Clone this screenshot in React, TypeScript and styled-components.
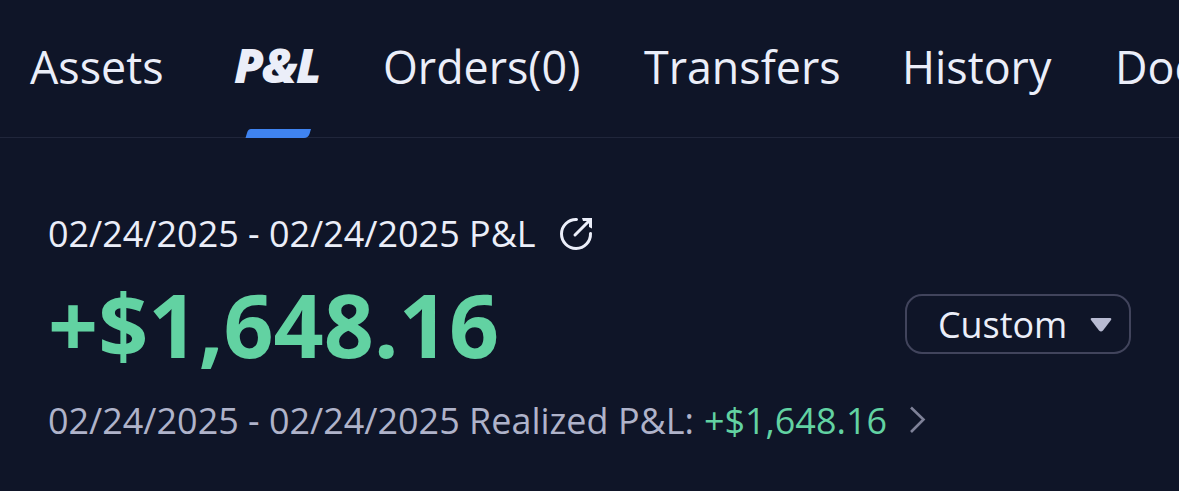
import styled, { createGlobalStyle } from 'styled-components';

const GlobalStyle = createGlobalStyle`
  * {
    box-sizing: border-box;
  }
  body {
    margin: 0;
    background: #0f1528;
    font-family: 'Open Sans', 'Noto Sans', sans-serif;
  }
`;

const Screen = styled.div`
  width: 1179px;
  height: 491px;
  overflow: hidden;
  background: #0f1528;
`;

const TabBar = styled.nav`
  display: flex;
  height: 138px;
  padding-left: 30px;
  box-shadow: inset 0 -1px #20263b;
  overflow: hidden;
`;

const Tab = styled.div<{ $width: number; $active?: boolean }>`
  display: flex;
  flex-direction: column;
  justify-content: space-between;
  flex: none;
  width: ${(props) => props.$width}px;
  padding-top: ${(props) => (props.$active ? 35 : 37)}px;
  color: #ebeef9;
  font-size: ${(props) => (props.$active ? 48 : 44.8)}px;
  font-weight: ${(props) => (props.$active ? 800 : 400)};
  font-style: ${(props) => (props.$active ? 'italic' : 'normal')};
  letter-spacing: ${(props) => (props.$active ? '-1.5px' : 'normal')};
  line-height: 60px;
  white-space: nowrap;
`;

const Label = styled.span`
  white-space: nowrap;
`;

const Indicator = styled.svg`
  display: block;
  margin-left: 10px;
`;

const Summary = styled.main`
  display: flex;
  flex-direction: column;
  padding: 70px 48px 0;
`;

const PeriodRow = styled.div`
  display: flex;
  align-items: center;
  height: 50px;
  color: #ebeef9;
  font-size: 35.95px;
  white-space: nowrap;
`;

const TotalRow = styled.div`
  display: flex;
  align-items: center;
  justify-content: space-between;
  height: 132px;
`;

const Total = styled.div`
  color: #62d2a2;
  font-size: 87.7px;
  font-weight: 700;
  line-height: 128px;
`;

const RangeSelect = styled.button`
  display: flex;
  align-items: center;
  justify-content: space-between;
  width: 226px;
  height: 60px;
  padding: 0 17px 0 31px;
  border: 2px solid #41445c;
  border-radius: 17px;
  background: transparent;
  color: #ebeef9;
  font: inherit;
  font-size: 35.9px;
`;

const RealizedRow = styled.div`
  display: flex;
  align-items: center;
  height: 60px;
  color: #afb3ca;
  font-size: 35.95px;
`;

const Gain = styled.span`
  margin-left: 10px;
  color: #62d2a2;
`;

const Icon = styled.svg<{ $gap?: number }>`
  flex: none;
  margin-left: ${(props) => props.$gap ?? 0}px;
`;

const tabs = [
  { label: 'Assets', width: 204 },
  { label: 'P&L', width: 149, active: true },
  { label: 'Orders(0)', width: 261 },
  { label: 'Transfers', width: 258 },
  { label: 'History', width: 213 },
  { label: 'Documents', width: 260 },
];

export default function App() {
  return (
    <Screen>
      <GlobalStyle />
      <TabBar>
        {tabs.map((tab) => (
          <Tab key={tab.label} $width={tab.width} $active={tab.active}>
            <Label>{tab.label}</Label>
            {tab.active && (
              <Indicator width="68" height="10" viewBox="0 0 68 10">
                <path d="M7 1H67L65.500 6Q64 10 60 10H1.500L3 5Q4 1 7 1Z" fill="#3f83f0" />
              </Indicator>
            )}
          </Tab>
        ))}
      </TabBar>
      <Summary>
        <PeriodRow>
          <Label>02/24/2025 - 02/24/2025 P&amp;L</Label>
          <Icon $gap={22} width="36" height="38" viewBox="0 -2 36 38" fill="none">
            <path
              d="M18.500 3.500A14.500 14.500 0 1 0 32.500 17.500"
              stroke="#ebeef9"
              strokeWidth="3"
              strokeLinecap="round"
            />
            <path d="M17 19L30 6" stroke="#ebeef9" strokeWidth="3" strokeLinecap="round" />
            <path d="M24 2H34V12.500L31 11V7.500L28.500 5H25Z" fill="#ebeef9" />
          </Icon>
        </PeriodRow>
        <TotalRow>
          <Total>+$1,648.16</Total>
          <RangeSelect>
            Custom
            <Icon width="22" height="16" viewBox="0 0 22 16">
              <path d="M2 2H20Q22 2 21 4L13 14.500Q11 16.500 9 14.500L1 4Q0 2 2 2Z" fill="#b8bbd2" />
            </Icon>
          </RangeSelect>
        </TotalRow>
        <RealizedRow>
          <Label>02/24/2025 - 02/24/2025 Realized P&amp;L:</Label>
          <Gain>+$1,648.16</Gain>
          <Icon $gap={21} width="18" height="28" viewBox="0 0 18 28" fill="none">
            <path d="M3 1.500L15.500 13.500L3 26" stroke="#7e8198" strokeWidth="2.600" />
          </Icon>
        </RealizedRow>
      </Summary>
    </Screen>
  );
}
